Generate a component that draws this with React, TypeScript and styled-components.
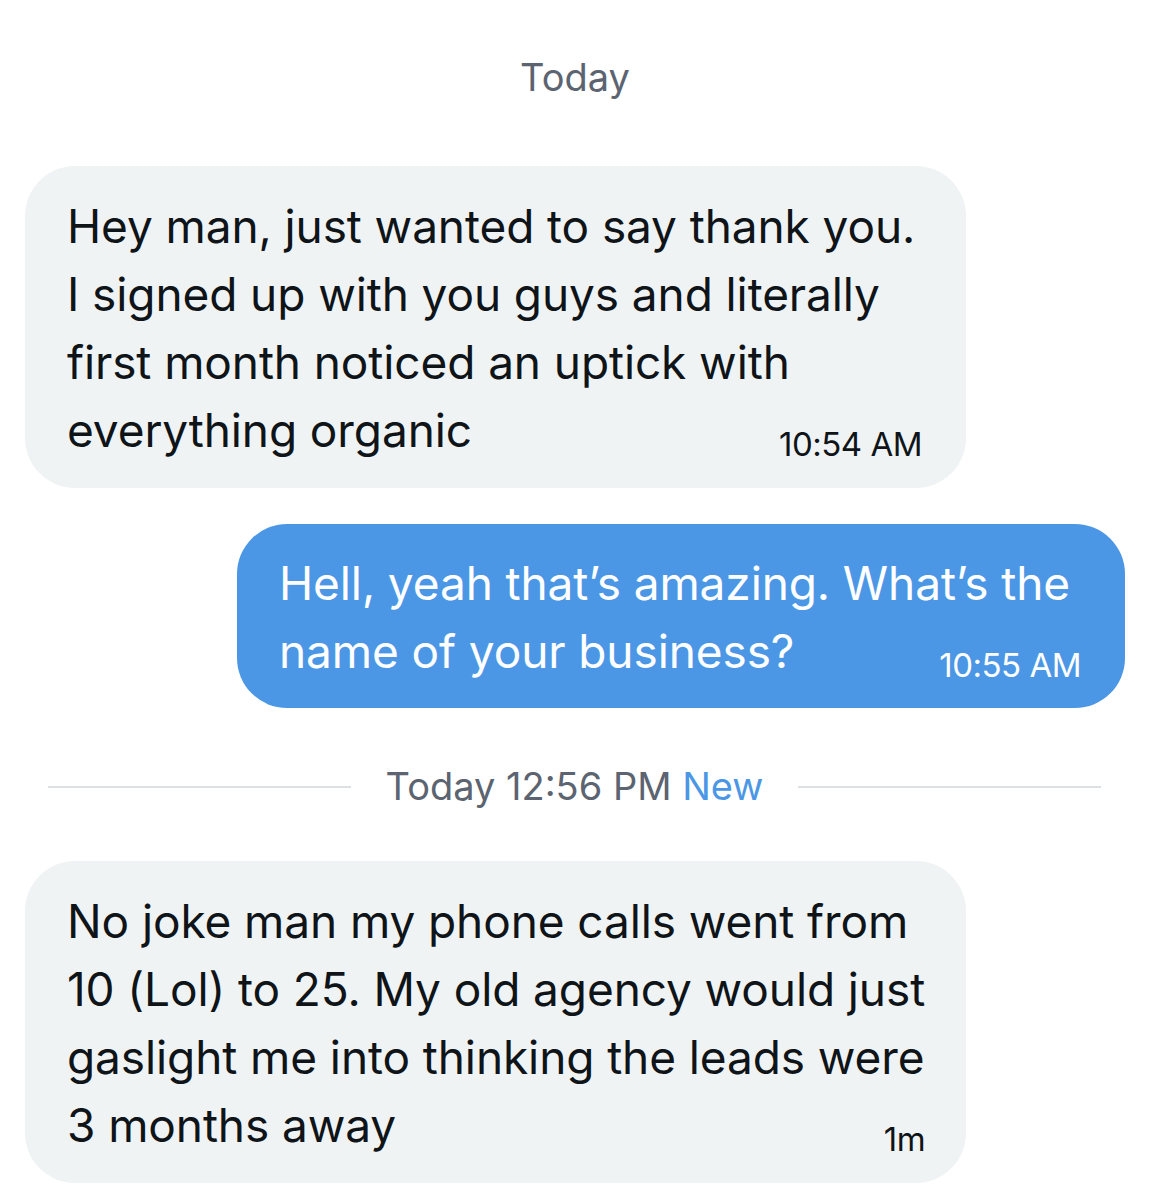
import styled, { createGlobalStyle } from "styled-components";

const GlobalStyle = createGlobalStyle`
  body {
    margin: 0;
    background: #ffffff;
    font-family: Inter, "Noto Sans", "Liberation Sans", sans-serif;
    -webkit-font-smoothing: antialiased;
  }
`;

type Message = {
  mine?: boolean;
  width: number;
  lines: string[];
  time: string;
};

const firstBatch: Message[] = [
  {
    width: 941,
    lines: [
      "Hey man, just wanted to say thank you.",
      "I signed up with you guys and literally",
      "first month noticed an uptick with",
      "everything organic",
    ],
    time: "10:54 AM",
  },
  {
    mine: true,
    width: 888,
    lines: ["Hell, yeah that’s amazing. What’s the", "name of your business?"],
    time: "10:55 AM",
  },
];

const secondBatch: Message[] = [
  {
    width: 941,
    lines: [
      "No joke man my phone calls went from",
      "10 (Lol) to 25. My old agency would just",
      "gaslight me into thinking the leads were",
      "3 months away",
    ],
    time: "1m",
  },
];

export default function App() {
  return (
    <>
      <GlobalStyle />
      <Conversation>
        <DayLabel>Today</DayLabel>
        <Thread>
          {firstBatch.map((m, i) => (
            <ChatBubble key={i} message={m} />
          ))}
        </Thread>
        <Divider>
          <Rule />
          <DividerText>
            Today 12:56 PM <NewTag>New</NewTag>
          </DividerText>
          <Rule />
        </Divider>
        <Thread>
          {secondBatch.map((m, i) => (
            <ChatBubble key={i} message={m} />
          ))}
        </Thread>
      </Conversation>
    </>
  );
}

const ChatBubble = ({ message }: { message: Message }) => (
  <Row $mine={message.mine}>
    <Bubble $mine={message.mine} $width={message.width}>
      <BubbleText>
        {message.lines.map((line, i) => (
          <Line key={i}>{line}</Line>
        ))}
      </BubbleText>
      <Time $mine={message.mine}>{message.time}</Time>
    </Bubble>
  </Row>
);

const Conversation = styled.main`
  display: flex;
  flex-direction: column;
  padding: 55px 26px 19px 25px;
`;

const DayLabel = styled.div`
  text-align: center;
  font-size: 38px;
  line-height: 45px;
  color: #5b6470;
  margin-bottom: 66px;
`;

const Thread = styled.div`
  display: flex;
  flex-direction: column;
  gap: 36px;
`;

const Row = styled.div<{ $mine?: boolean }>`
  display: flex;
  justify-content: ${(p) => (p.$mine ? "flex-end" : "flex-start")};
`;

const Bubble = styled.div<{ $mine?: boolean; $width: number }>`
  display: grid;
  box-sizing: border-box;
  width: ${(p) => p.$width}px;
  padding: ${(p) => (p.$mine ? "25px 44px 23px 42px" : "26px 44px 24px 42px")};
  border-radius: 50px;
  background: ${(p) => (p.$mine ? "#4b97e6" : "#eff3f4")};
  color: ${(p) => (p.$mine ? "#ffffff" : "#0f1419")};
`;

const BubbleText = styled.p`
  grid-area: 1 / 1;
  margin: 0;
  font-size: 46px;
  line-height: 68px;
  letter-spacing: -0.1px;
`;

const Line = styled.span`
  display: block;
  white-space: nowrap;
`;

const Time = styled.span<{ $mine?: boolean }>`
  grid-area: 1 / 1;
  justify-self: end;
  align-self: end;
  font-size: 33px;
  line-height: 40px;
  letter-spacing: -0.5px;
  color: ${(p) => (p.$mine ? "#ffffff" : "#0f1419")};
`;

const Divider = styled.div`
  display: flex;
  align-items: center;
  gap: 35px;
  margin: 56px 24px 52px 23px;
`;

const Rule = styled.div`
  flex: 1;
  height: 2px;
  background: #dde1e4;
`;

const DividerText = styled.span`
  font-size: 38px;
  line-height: 45px;
  color: #5b6470;
  white-space: nowrap;
`;

const NewTag = styled.span`
  color: #4b97e6;
`;
